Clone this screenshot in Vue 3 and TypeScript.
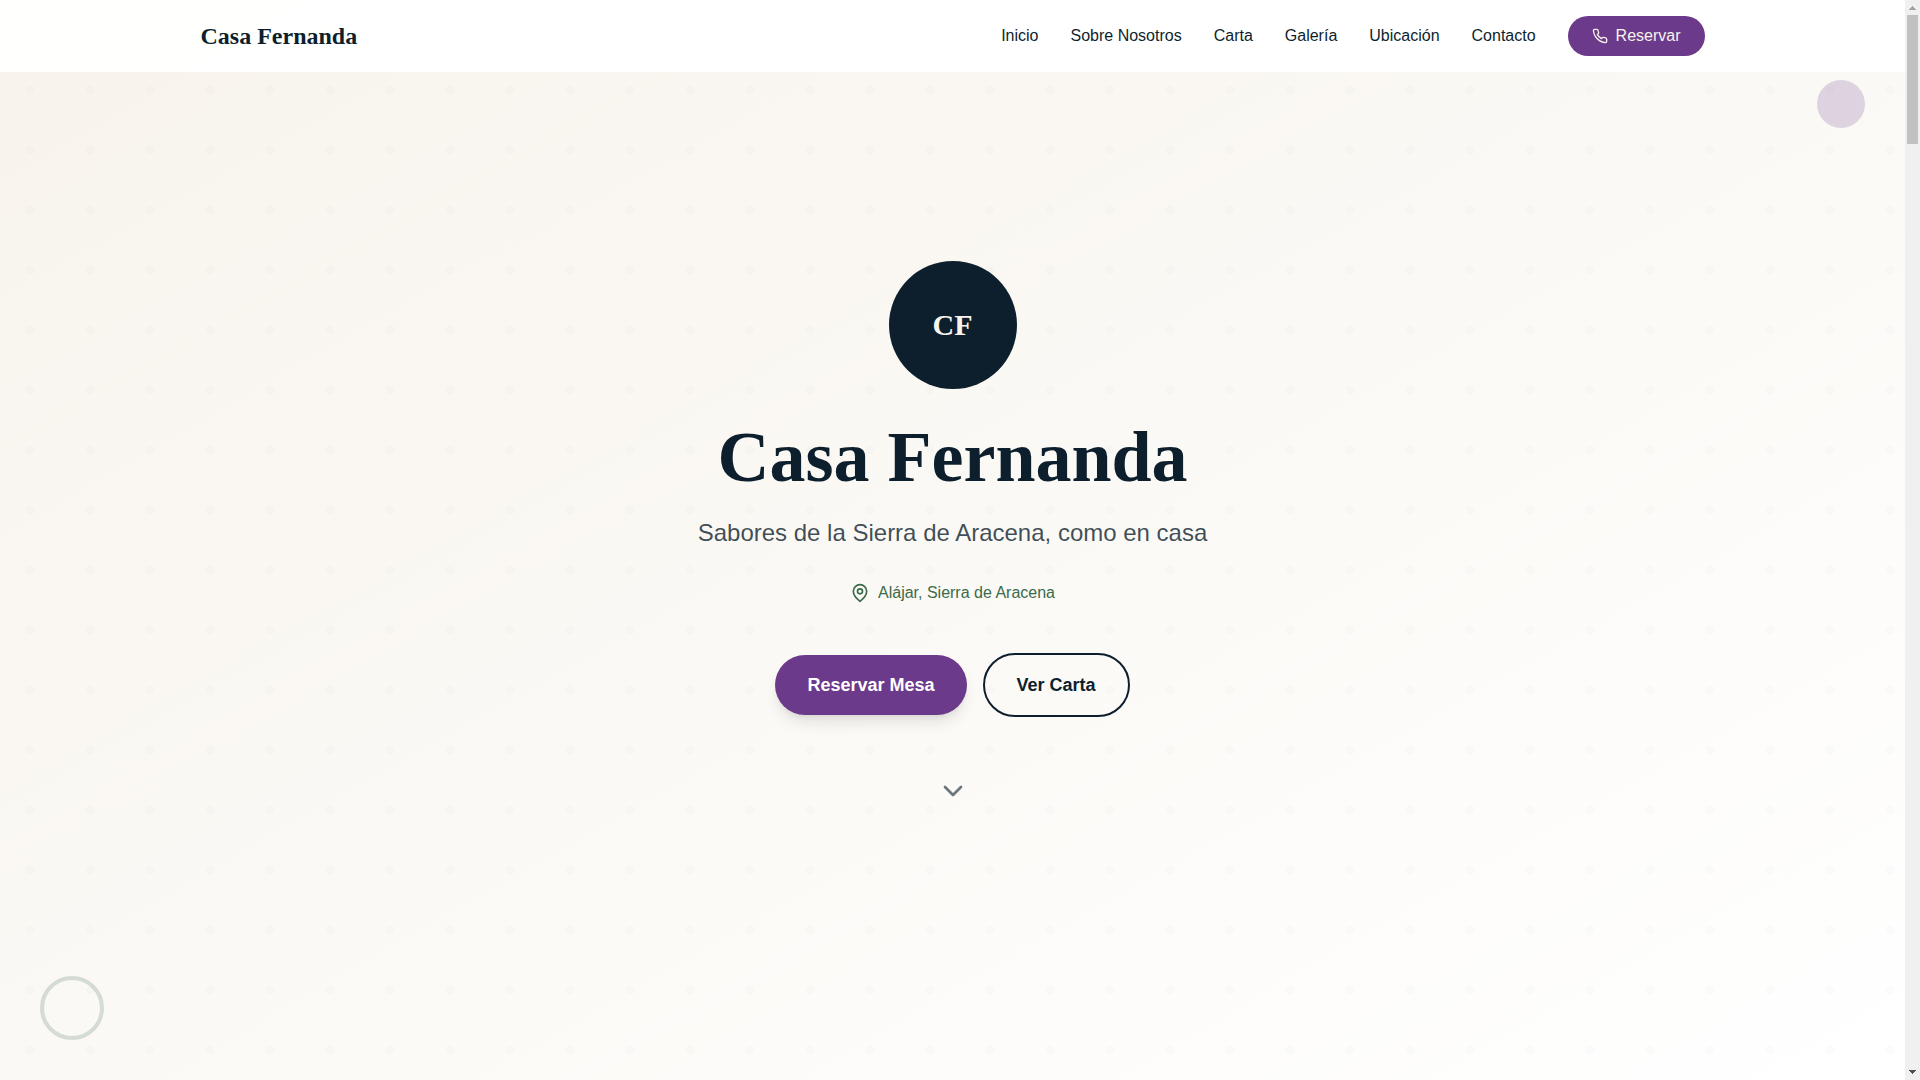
<script setup lang="ts">
interface NavItem {
  label: string
  href: string
}

const navItems: NavItem[] = [
  { label: 'Inicio', href: '#inicio' },
  { label: 'Sobre Nosotros', href: '#sobre-nosotros' },
  { label: 'Carta', href: '#carta' },
  { label: 'Galería', href: '#galeria' },
  { label: 'Ubicación', href: '#ubicacion' },
  { label: 'Contacto', href: '#contacto' },
]
</script>

<template>
  <div class="page">
    <div class="site">
      <header class="header">
        <div class="header-inner">
          <a class="brand" href="#inicio">Casa Fernanda</a>
          <nav class="nav">
            <a v-for="item in navItems" :key="item.href" class="nav-link" :href="item.href">{{ item.label }}</a>
            <button class="reserve" type="button">
              <svg width="16" height="16" viewBox="0 0 24 24" class="icon" aria-hidden="true">
                <path d="M22 16.92v3a2 2 0 0 1-2.18 2 19.79 19.79 0 0 1-8.63-3.07 19.5 19.5 0 0 1-6-6 19.79 19.79 0 0 1-3.07-8.67A2 2 0 0 1 4.11 2h3a2 2 0 0 1 2 1.72 12.84 12.84 0 0 0 .7 2.81 2 2 0 0 1-.45 2.11L8.09 9.91a16 16 0 0 0 6 6l1.27-1.27a2 2 0 0 1 2.11-.45 12.84 12.84 0 0 0 2.81.7A2 2 0 0 1 22 16.92z" />
              </svg>
              <span>Reservar</span>
            </button>
          </nav>
        </div>
      </header>

      <main id="inicio" class="hero">
        <span class="deco-disc"></span>
        <span class="deco-ring"></span>
        <div class="emblem">CF</div>
        <h1 class="title">Casa Fernanda</h1>
        <p class="tagline">Sabores de la Sierra de Aracena, como en casa</p>
        <p class="place">
          <svg width="20" height="20" viewBox="0 0 24 24" class="icon" aria-hidden="true">
            <path d="M20 10c0 6-8 12-8 12s-8-6-8-12a8 8 0 0 1 16 0Z" />
            <circle cx="12" cy="10" r="3" />
          </svg>
          <span>Alájar, Sierra de Aracena</span>
        </p>
        <div class="actions">
          <button class="action primary" type="button">Reservar Mesa</button>
          <button class="action outline" type="button">Ver Carta</button>
        </div>
        <a class="scroll-hint" href="#sobre-nosotros" aria-label="Bajar">
          <svg width="32" height="32" viewBox="0 0 24 24" class="icon" aria-hidden="true">
            <path d="m6 9 6 6 6-6" />
          </svg>
        </a>
      </main>
    </div>

    <div class="scrollbar" aria-hidden="true">
      <svg width="15" height="15" viewBox="0 0 15 15" shape-rendering="crispEdges">
        <path fill="#a3a3a3" d="M7 6h1v1h1v1h1v1h1v1H4V9h1V8h1V7h1z" />
      </svg>
      <div class="track"><div class="thumb"></div></div>
      <svg width="15" height="15" viewBox="0 0 15 15" shape-rendering="crispEdges">
        <path fill="#505050" d="M4 5h7v1h-1v1H9v1H8v1H7V8H6V7H5V6H4z" />
      </svg>
    </div>
  </div>
</template>

<style>
body {
  margin: 0;
}
</style>

<style scoped>
.page {
  --navy: #0d1f2d;
  --purple: #6b3a8a;
  --green: #3a6b4a;
  --cream: #f8f3ec;
  display: grid;
  grid-template-columns: minmax(0, 1fr) 15px;
  min-height: 100vh;
  color: var(--navy);
  font: 16px/24px "Liberation Sans", Arial, sans-serif;
}

.page *,
.page *::before {
  box-sizing: border-box;
}

/* Header and hero share one cell so the bar floats over the hero. */
.site {
  display: grid;
}

.header,
.hero {
  grid-area: 1 / 1;
}

.header {
  z-index: 2;
  align-self: start;
  background: rgba(255, 255, 255, 0.95);
}

.header-inner {
  display: flex;
  align-items: center;
  justify-content: space-between;
  max-width: 1536px;
  margin: 0 auto;
  padding: 16px;
}

.brand {
  color: inherit;
  font: bold 24px/32px "Liberation Serif", "Times New Roman", serif;
  text-decoration: none;
}

.nav {
  display: flex;
  align-items: center;
  gap: 32px;
}

.nav-link {
  color: inherit;
  text-decoration: none;
}

button {
  border: 0;
  cursor: pointer;
  font: inherit;
}

.icon {
  display: block;
  flex: none;
  fill: none;
  stroke: currentColor;
  stroke-width: 2;
  stroke-linecap: round;
  stroke-linejoin: round;
}

.reserve {
  display: flex;
  align-items: center;
  gap: 8px;
  padding: 8px 24px;
  border-radius: 20px;
  background: var(--purple);
  color: var(--cream);
}

.hero {
  position: relative;
  display: flex;
  flex-direction: column;
  align-items: center;
  justify-content: center;
  padding: 96px 16px;
  background:
    radial-gradient(circle at 30px 30px, rgba(13, 31, 45, 0.016) 4px, transparent 4px) 0 0 / 60px 60px,
    linear-gradient(to bottom right, #f8f3ec 0%, #fbf9f5 50%, #ffffff 100%);
}

.deco-disc {
  position: absolute;
  top: 80px;
  right: 40px;
  width: 48px;
  height: 48px;
  border-radius: 50%;
  background: var(--purple);
  opacity: 0.2;
}

.deco-ring {
  position: absolute;
  bottom: 40px;
  left: 40px;
  width: 64px;
  height: 64px;
  border: 4px solid var(--green);
  border-radius: 50%;
  opacity: 0.2;
}

.emblem {
  display: flex;
  align-items: center;
  justify-content: center;
  width: 128px;
  height: 128px;
  border-radius: 50%;
  background: var(--navy);
  color: var(--cream);
  font: bold 30px/36px "Liberation Serif", "Times New Roman", serif;
}

.title {
  margin: 32px 0 24px;
  font: bold 72px/72px "Liberation Serif", "Times New Roman", serif;
}

.tagline {
  margin: 0;
  color: rgba(13, 31, 45, 0.8);
  font-size: 24px;
  line-height: 32px;
}

.place {
  display: flex;
  align-items: center;
  gap: 8px;
  margin: 32px 0 48px;
  color: var(--green);
}

.actions {
  display: flex;
  align-items: center;
  gap: 16px;
}

.action {
  padding: 16px 32px;
  border-radius: 32px;
  font-size: 18px;
  font-weight: bold;
  line-height: 28px;
}

.primary {
  background: var(--purple);
  color: #ffffff;
  box-shadow: 0 10px 15px -3px rgba(0, 0, 0, 0.1), 0 4px 6px -4px rgba(0, 0, 0, 0.1);
}

.outline {
  border: 2px solid var(--navy);
  background: transparent;
  color: var(--navy);
}

.scroll-hint {
  margin: 58px 0 12px;
  color: var(--navy);
  opacity: 0.6;
}

.scrollbar {
  display: flex;
  flex-direction: column;
  background: #f0f0f0;
}

.track {
  flex: 1;
  padding: 0 2px;
}

.thumb {
  height: 129px;
  background: #c1c1c1;
}
</style>
